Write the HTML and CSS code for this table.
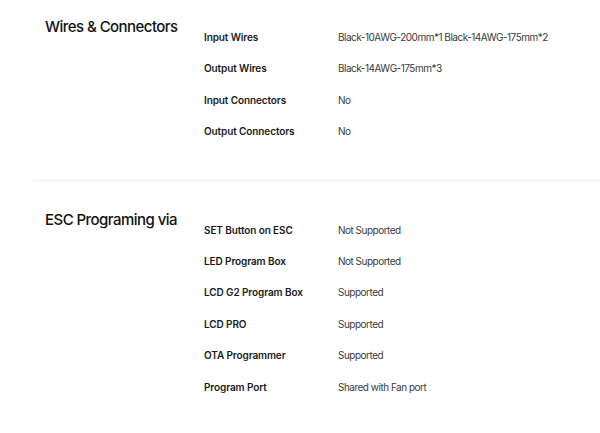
FILE: index.html
```html
<!DOCTYPE html>
<html>
<head>
<meta charset="utf-8">
<link rel="stylesheet" href="styles.css">
</head>
<body>
<div class="specs">
  <section class="section first">
    <h2 class="title">Wires &amp; Connectors</h2>
    <div class="table">
      <div class="row"><div class="label">Input Wires</div><div class="value">Black-10AWG-200mm*1 Black-14AWG-175mm*2</div></div>
      <div class="row"><div class="label">Output Wires</div><div class="value">Black-14AWG-175mm*3</div></div>
      <div class="row"><div class="label">Input Connectors</div><div class="value">No</div></div>
      <div class="row"><div class="label">Output Connectors</div><div class="value">No</div></div>
    </div>
  </section>
  <section class="section">
    <h2 class="title">ESC Programing via</h2>
    <div class="table">
      <div class="row"><div class="label">SET Button on ESC</div><div class="value">Not Supported</div></div>
      <div class="row"><div class="label">LED Program Box</div><div class="value">Not Supported</div></div>
      <div class="row"><div class="label">LCD G2 Program Box</div><div class="value">Supported</div></div>
      <div class="row"><div class="label">LCD PRO</div><div class="value">Supported</div></div>
      <div class="row"><div class="label">OTA Programmer</div><div class="value">Supported</div></div>
      <div class="row"><div class="label">Program Port</div><div class="value">Shared with Fan port</div></div>
    </div>
  </section>
</div>
</body>
</html>
```

FILE: styles.css
```css
html, body {
  margin: 0;
  padding: 0;
  background: #ffffff;
}
body {
  font-family: Inter, "Noto Sans", "Liberation Sans", sans-serif;
  color: #1a1a1a;
}
.specs {
  margin-left: 33px;
}
.section {
  display: flex;
  align-items: flex-start;
  padding: 29px 0 32px 12px;
  border-bottom: 1px solid #ececec;
}
.section.first {
  padding-top: 17px;
}
.title {
  width: 159px;
  flex: none;
  margin: 0;
  font-size: 15px;
  line-height: 20px;
  font-weight: 500;
  color: #111111;
  letter-spacing: -0.55px;
}
.table {
  display: flex;
  flex-direction: column;
  padding-top: 5px;
}
.row {
  display: flex;
  padding: 8px 0;
  line-height: 15.4px;
  font-size: 10px;
}
.label {
  width: 134px;
  flex: none;
  font-weight: 600;
  color: #1a1a1a;
  letter-spacing: -0.1px;
}
.value {
  font-weight: 400;
  color: #3a3a3a;
  letter-spacing: -0.5px;
}
```
